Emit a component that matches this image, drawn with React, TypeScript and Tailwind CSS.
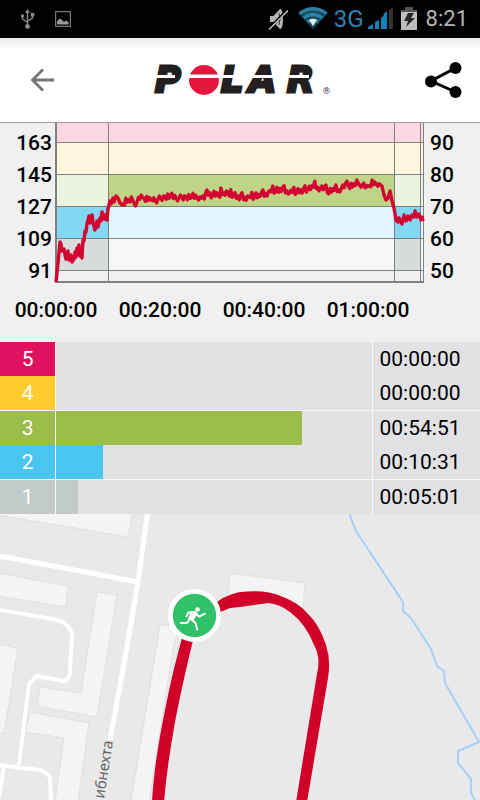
type Zone = { zone: number; seconds: number; head: string; bar: string; line?: boolean };

const ZONES: Zone[] = [
  { zone: 5, seconds: 0, head: "bg-[#e0115f]", bar: "bg-[#e0115f]" },
  { zone: 4, seconds: 0, head: "bg-[#ffcb2f]", bar: "bg-[#ffcb2f]" },
  { zone: 3, seconds: 3291, head: "bg-[#9cbd4a]", bar: "bg-[#9cbd4a]", line: true },
  { zone: 2, seconds: 631, head: "bg-[#48c6ef]", bar: "bg-[#48c6ef]" },
  { zone: 1, seconds: 301, head: "bg-[#c2cbca]", bar: "bg-[#c2cbca]", line: true },
];

const BPM = [163, 145, 127, 109, 91];
const PERCENT = [90, 80, 70, 60, 50];
const TIMES = ["00:00:00", "00:20:00", "00:40:00", "01:00:00"];

const WARM_UP = [
  [0, 159], [2, 140], [4, 119], [5, 121], [6, 128], [8, 126], [9, 132], [10, 136], [12, 128], [13, 137],
  [15, 132], [16, 139], [18, 136], [19, 129], [20, 134], [21, 125], [22, 131], [23, 122], [24, 133], [25, 127],
  [26, 135], [27, 117], [28, 118], [29, 108], [30, 109], [31, 101], [33, 93], [34, 100], [36, 92], [37, 100],
  [39, 107], [41, 98], [42, 104], [44, 95], [45, 98], [46, 89], [48, 96], [49, 92], [51, 97], [52, 86],
  [54, 78], [55, 81], [57, 75], [58, 79], [60, 73], [62, 75], [64, 80], [66, 82],
];
const STEADY = [
  [66, 82], [70, 77], [80, 79], [84, 75], [100, 76], [111, 73], [125, 74], [144, 73], [149, 73], [151, 67], [154, 72],
  [171, 69], [184, 75], [207, 72], [217, 67], [247, 69], [259, 62], [272, 68], [287, 64], [306, 60],
  [311, 66], [316, 59], [324, 62],
];
const COOL_DOWN = [
  [326, 63], [328, 72], [330, 77], [332, 75], [334, 68], [336, 78], [338, 85], [340, 97], [342, 99], [343, 95],
  [346, 101], [348, 92], [350, 98], [352, 93], [354, 97], [356, 92], [358, 94], [359, 88], [361, 94],
  [363, 91], [365, 97], [366, 94], [367, 98],
];
const BEAT = [0, 3, -2, 2, -1, 1, -4, 3, 1, -3, 2, -1, 2, 4, 1, -2, 1, -3, -5, 2, 0, 3, -1];

function valueAt(x: number) {
  const i = Math.max(1, STEADY.findIndex(p => p[0] >= x));
  const [x0, y0] = STEADY[i - 1];
  const [x1, y1] = STEADY[i];
  return y0 + ((y1 - y0) * (x - x0)) / (x1 - x0);
}

function heartRate() {
  const pts = [...WARM_UP];
  for (let x = 67, n = 0; x <= 324; x += 1.4, n++) pts.push([x, valueAt(x) + BEAT[(n + Math.floor(n / 7) * 4) % BEAT.length]]);
  return [...pts, ...COOL_DOWN].map(p => p.join(",")).join(" ");
}

function clock(s: number) {
  return [Math.floor(s / 3600), Math.floor(s / 60) % 60, s % 60].map(n => String(n).padStart(2, "0")).join(":");
}

export default function App() {
  return (
    <div className="flex min-h-screen flex-col bg-[#f0f0f0] font-[Roboto,sans-serif] text-black">
      <StatusBar />
      <AppBar />
      <HeartRateChart />
      <ZoneTable />
      <RouteMap />
    </div>
  );
}

function StatusBar() {
  return (
    <div className="flex h-[38px] items-center bg-black pr-3 pl-5">
      <svg className="h-5 w-4" viewBox="0 0 16 20" fill="none" stroke="#8a8a8a" strokeWidth="1.4">
        <path d="M7.500 2v15M7.500 13.500L2.500 10V6M7.500 12L12.500 9V5" />
        <path d="M7.500 0L10 4H5z" fill="#8a8a8a" stroke="none" />
        <circle cx="7.500" cy="17.500" r="2.400" fill="#8a8a8a" stroke="none" />
        <circle cx="2.500" cy="7" r="1.700" fill="#8a8a8a" stroke="none" />
        <path d="M10.700 4h3.600v3.500h-3.600z" fill="#8a8a8a" stroke="none" />
      </svg>
      <svg className="ml-[19px] h-4 w-4" viewBox="0 0 16 16">
        <path d="M.6.600h14.800v14.800H.6z" fill="none" stroke="#777" strokeWidth="1.200" />
        <path d="M2 13.500V10.500L4 8l2 0 3 3 2-1.500 2.500 1.500v2.500z" fill="#9a9a9a" />
      </svg>
      <div className="ml-auto flex items-center">
        <svg className="h-6 w-5" viewBox="0 0 20 24">
          <path d="M2 9h3.500L10 4q1.500-2 3-2 2 3 2 10t-2 10q-2 0-3-2L5.500 15H2z" fill="#b5b5b5" />
          <path d="M11 6q2 6 0 12" fill="none" stroke="#333" />
          <path d="M0 23L18.500 4" stroke="#000" strokeWidth="3" />
          <path d="M1 22.500L20 3.500" stroke="#c4c4c4" strokeWidth="1.500" />
        </svg>
        <svg className="ml-[10px] h-6 w-[30px]" viewBox="0 0 30 24" fill="none" stroke="#2b80a3" strokeWidth="3.200">
          <path d="M0 6Q15-4 30 6L15 22z" fill="#17495e" stroke="none" />
          <path d="M1.500 6.500Q15-3 28.500 6.500M5.500 11Q15 4 24.500 11M9.500 15Q15 11.500 20.500 15" />
          <path d="M11 13q4-2.500 8 0L15 19z" fill="#e4eef2" stroke="none" />
        </svg>
        <span className="ml-[6px] text-2xl leading-none text-[#2f83b3]">3G</span>
        <svg className="ml-1 h-6 w-[26px]" viewBox="0 0 26 24">
          <path d="M0 22v-2l5-3v5zM7 22v-7l4-2v9zM13 22V11l4-3v14z" fill="#0d84b8" />
          <path d="M15.500 22V7l3.500-3v18z" fill="#0d84b8" />
          <path d="M21 22V3l4-3V22z" fill="#343434" />
        </svg>
        <svg className="ml-[7px] h-6 w-4" viewBox="0 0 16 24">
          <path d="M4 0h8v3h4v7H0V3h4z" fill="#555" />
          <path d="M0 5h16v18H0z" fill="#bebebe" />
          <path d="M7 6h6l-3 5h4L5 20l2-6H3z" fill="#292929" />
        </svg>
        <span className="ml-[9px] text-[22px] leading-none text-[#b8b8b8]">8:21</span>
      </div>
    </div>
  );
}

function AppBar() {
  return (
    <header className="flex h-[85px] items-center justify-between border-b border-[#a0a0a0] bg-linear-to-b from-[#ececec] via-white via-15% to-white pr-[18px] pl-[30px]">
      <button type="button" aria-label="Back" className="flex h-12 w-[26px] items-center">
        <svg className="h-6 w-6" viewBox="0 0 24 24" fill="none" stroke="#757575" strokeWidth="2.800">
          <path d="M24 12H2M13 1.500L2.500 12 13 22.500" />
        </svg>
      </button>
      <Logo />
      <button type="button" aria-label="Share" className="flex h-12 w-[37px] items-center">
        <svg className="h-9 w-[37px]" viewBox="0 0 37 36">
          <path d="M30.500 6L6 19l24.500 11" fill="none" stroke="#000" strokeWidth="3" />
          <circle cx="30.500" cy="6" r="6" />
          <circle cx="6" cy="19.500" r="6" />
          <circle cx="30.500" cy="30" r="6" />
        </svg>
      </button>
    </header>
  );
}

function Logo() {
  return (
    <svg className="h-10 w-[180px]" viewBox="0 -4 180 40" role="img" aria-label="Polar">
      <g fill="#231f20" stroke="#231f20" strokeWidth="3" fontFamily="DejaVu Sans" fontWeight="700" fontStyle="italic" fontSize="35">
        <text x="4 70 98 136" y="28">PLAR</text>
      </g>
      <circle cx="53" cy="16" r="15" fill="#e4173e" />
      <path d="M0 11h24v3H0zM36 10.500h34v3.500H36zM70 11h62v3H70zM132 11h26v3h-26z" fill="#fff" />
      <text x="172" y="30" fontFamily="Roboto" fontSize="9" fill="#444">®</text>
    </svg>
  );
}

function HeartRateChart() {
  return (
    <section className="h-[219px] text-[21px] font-medium">
      <div className="flex">
        <ul className="w-14 shrink-0 pt-1 pr-1 text-right">
          {BPM.map(n => <li key={n} className="h-8 leading-8">{n}</li>)}
        </ul>
        <svg className="h-[164px] min-w-0 flex-1 overflow-visible" viewBox="0 0 368 164" preserveAspectRatio="none">
          <path d="M0 0h367v20H0z" fill="#fad7e2" />
          <path d="M0 20h367v32H0z" fill="#fff6de" />
          <path d="M0 52h367v32H0z" fill="#ecf3e1" />
          <path d="M0 84h367v32H0z" fill="#e2f5fc" />
          <path d="M0 116h367v32H0z" fill="#f5f8f7" />
          <path d="M52 52h286v32H52z" fill="#bfd486" />
          <path d="M0 84h52v32H0zM338 84h26v32h-26z" fill="#84d7f2" />
          <path d="M0 116h52v32H0zM338 116h26v32h-26z" fill="#d6dddc" />
          <path d="M0 19.500h367M0 51.500h367M0 83.500h367M0 115.500h367M0 147.500h367M52.500 0v159M338.500 0v159M364.500 0v159M367.500 0v159" stroke="#808080" />
          <path d="M0 0v159h368" fill="none" stroke="#808080" strokeWidth="2" />
          <polyline points={heartRate()} fill="none" stroke="#d10530" strokeWidth="3.400" strokeLinejoin="round" />
        </svg>
        <ul className="w-14 shrink-0 pt-1 pl-[6px]">
          {PERCENT.map(n => <li key={n} className="h-8 leading-8">{n}</li>)}
        </ul>
      </div>
      <div className="flex pt-[7px] pl-1">
        {TIMES.map(t => <span key={t} className="w-[104px] text-center leading-8">{t}</span>)}
      </div>
    </section>
  );
}

function ZoneTable() {
  const total = ZONES.reduce((s, z) => s + z.seconds, 0);
  return (
    <table className="w-full table-fixed border-collapse bg-[#e2e2e4] text-[21px]">
      <colgroup>
        <col className="w-[55px]" />
        <col />
        <col className="w-[108px]" />
      </colgroup>
      <tbody>
        {ZONES.map(z => (
          <tr key={z.zone} className={z.line ? "border-t border-[#f8f8f8]" : ""}>
            <th scope="row" className={`p-0 pl-px leading-[34px] font-normal text-white ${z.head}`}>{z.zone}</th>
            <td className="border-l border-[#f8f8f8] p-0">
              <div className={`h-[34px] ${z.bar}`} style={{ width: `${(z.seconds / total) * 100}%` }} />
            </td>
            <td className="border-l border-[#f8f8f8] p-0 pl-[7px] leading-[34px]">{clock(z.seconds)}</td>
          </tr>
        ))}
      </tbody>
    </table>
  );
}

function RouteMap() {
  return (
    <svg className="min-h-[286px] w-full flex-1 bg-[#e9e9e9]" viewBox="0 0 480 286" preserveAspectRatio="xMidYMin slice" role="img" aria-label="Route map">
      {/* buildings */}
      <g fill="#f4f4f4" stroke="#dcdcdc" strokeWidth=".8">
        <path d="M-2-2H133L128 23-2 1z" />
        <path d="M-2 59L68 72 66 93-2 82z" />
        <path d="M97 78L117 81 97 203 37 192 40 173 81 179z" />
        <path d="M-2 130L18 134 4 219H-2z" />
        <path d="M30 198L89 209 78 288H55L64 224 25 218z" />
        <path d="M160 111L182 112 174 129 149 288H131z" />
        <path d="M230 59L305 69 303 94 228 85z" />
      </g>
      {/* roads */}
      <g fill="none" stroke="#fff" strokeLinejoin="round">
        <path d="M0 42L138 68" strokeWidth="5" />
        <path d="M148-4L138 68 124 150 110 226" strokeWidth="5" />
        <path d="M0 96L58 106Q72 112 72 122L70 158Q69 167 64 167L37 162 29 170 19 251" strokeWidth="4" />
        <path d="M-2 251L40 256Q50 260 50 265L51 288M4 252L-1 284" strokeWidth="4" />
      </g>
      <text x="104" y="285" transform="rotate(-81 104 285)" fontFamily="Noto Sans, sans-serif" fontSize="15" fill="#666">ибнехта</text>
      <path
        d="M349-1L356 17 403 88V97L411 104 431 135 437 152 444 157 445 169 479 228 458 237V249L471 265V279L476 288"
        fill="none" stroke="#a6cffa" strokeWidth="2" strokeLinejoin="round"
      />
      {/* track */}
      <g fill="#d10028">
        <path d="M184 117L197 110Q183 166 175 208 167 252 164 288H152Q154 250 165 196 173 155 184 117z" />
        <path d="M208 94L217 88Q230 78 247 77.500 269 76 283 83 299 89 308 100 319 110 326 131 331 146 328 164L307 288H296L317 160Q321 143 314 131 306 110 290 98 280 90 268 89L240 93 230 94 218 99z" />
      </g>
      {/* start marker */}
      <circle cx="194.500" cy="101.500" r="26.500" fill="#fff" />
      <circle cx="194.500" cy="101.500" r="21.700" fill="#31c169" />
      <g fill="none" stroke="#fff" strokeWidth="2" strokeLinejoin="round">
        <circle cx="197.500" cy="95.500" r="2.300" fill="#fff" stroke="none" />
        <path d="M191.500 97.500h4l1.500 2-4 7-4.500-1.500z" fill="#fff" strokeWidth="1" />
        <path d="M192 98.200L188.500 98.500 186 103M196 99.500L199 102.500 205.500 99.500M190 104.500L187 109H180M191.500 105.500L195.500 109 197.500 116.500" />
      </g>
    </svg>
  );
}
